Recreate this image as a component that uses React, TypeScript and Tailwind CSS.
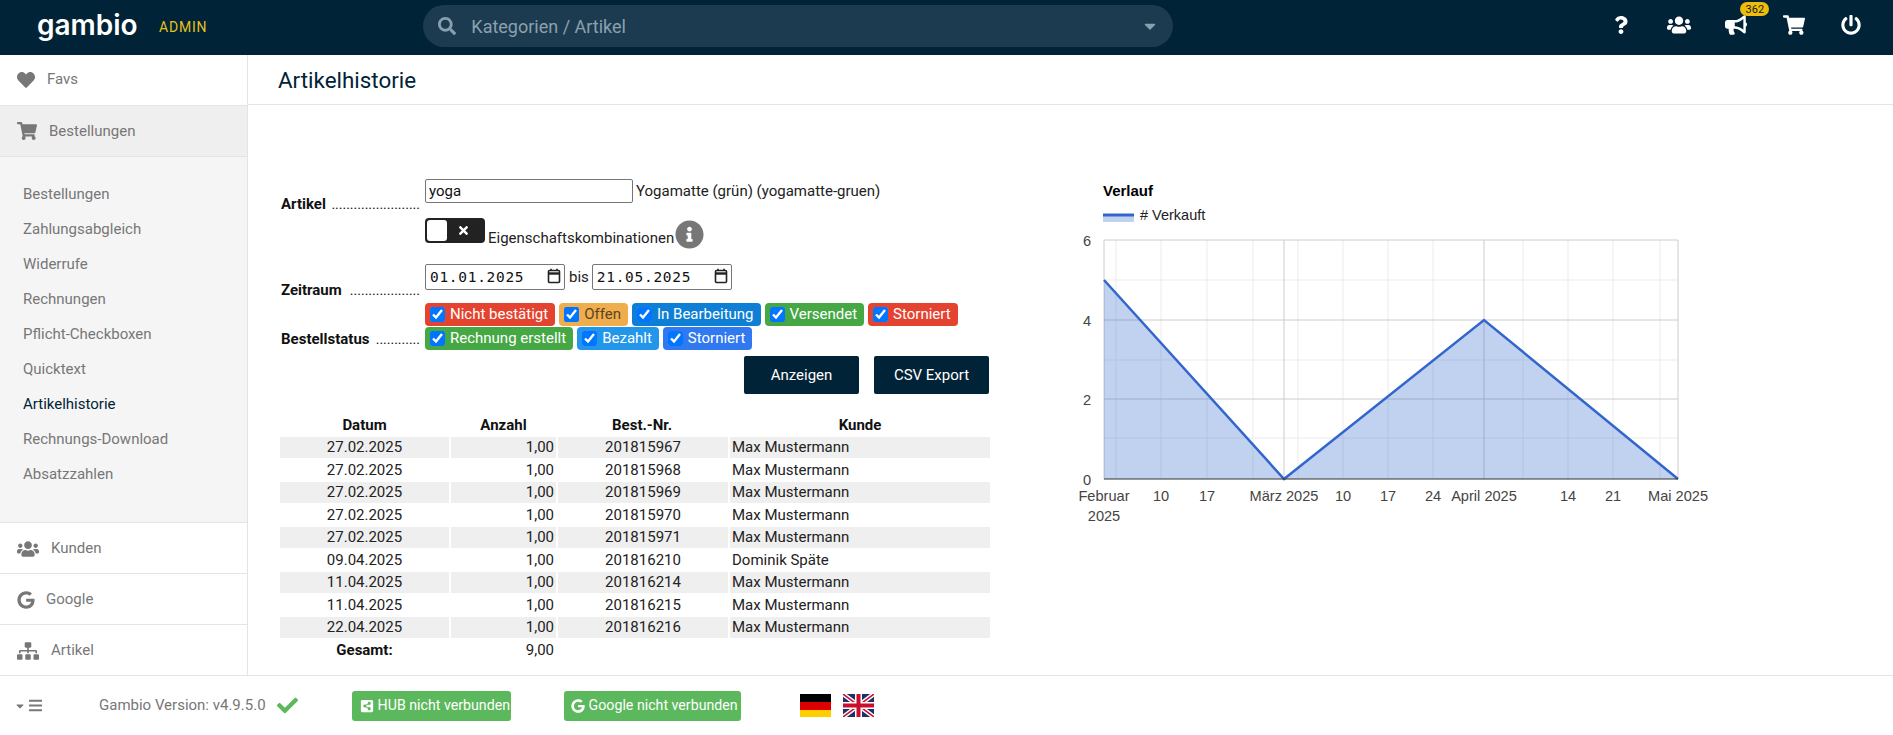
import { FaBars, FaBullhorn, FaCaretDown, FaCheck, FaGoogle, FaHeart, FaInfoCircle, FaPowerOff, FaQuestion, FaSearch, FaShareAltSquare, FaShoppingCart, FaSitemap, FaTimes, FaUsers } from 'react-icons/fa'

const subItems = ['Bestellungen', 'Zahlungsabgleich', 'Widerrufe', 'Rechnungen', 'Pflicht-Checkboxen', 'Quicktext', 'Artikelhistorie', 'Rechnungs-Download', 'Absatzzahlen']

const rows = [
  ['27.02.2025', '201815967', 'Max Mustermann'],
  ['27.02.2025', '201815968', 'Max Mustermann'],
  ['27.02.2025', '201815969', 'Max Mustermann'],
  ['27.02.2025', '201815970', 'Max Mustermann'],
  ['27.02.2025', '201815971', 'Max Mustermann'],
  ['09.04.2025', '201816210', 'Dominik Späte'],
  ['11.04.2025', '201816214', 'Max Mustermann'],
  ['11.04.2025', '201816215', 'Max Mustermann'],
  ['22.04.2025', '201816216', 'Max Mustermann'],
]

function Label({ text, dots, className }: { text: string; dots: number; className: string }) {
  return (
    <div className={`ml-px flex w-[139px] justify-between font-bold text-[15px] leading-5 text-[#111] ${className}`}>
      <span>{text}</span>
      <span className="font-normal text-[14px]">{'.'.repeat(dots)}</span>
    </div>
  )
}

function Status({ text, className }: { text: string; className: string }) {
  return (
    <label className={`flex h-[23px] items-center gap-[5px] rounded-[4px] pl-[5px] pr-[7px] text-[15px] ${className}`}>
      <input type="checkbox" defaultChecked className="h-[15px] w-[15px] m-0" />
      {text}
    </label>
  )
}

function DateBox({ value }: { value: string }) {
  return (
    <div className="flex h-[26px] w-[140px] items-center justify-between rounded-[2px] border border-[#767676] pl-[4px] pr-[3px]">
      <span className="pt-px font-['DejaVu_Sans_Mono'] text-[14.5px] tracking-[0.7px] text-[#111]">{value}</span>
      <svg width="14" height="16" viewBox="0 0 14 16" fill="none" stroke="#222" strokeWidth="1.6" className="mb-[2px]">
        <rect x="1.5" y="2.5" width="11" height="12" rx="1" />
        <path d="M1.5 5.5h11" strokeWidth="2.4" />
        <path d="M4 0.8v2M10 0.8v2" />
      </svg>
    </div>
  )
}

function SideRow({ icon, text, gap }: { icon: React.ReactNode; text: string; gap: string }) {
  return (
    <div className={`flex h-[51px] items-center border-t border-[#e4e4e4] pl-[17px] pt-px text-[#777] text-[15px] ${gap}`}>
      {icon}
      <span>{text}</span>
    </div>
  )
}

function Chart() {
  const minor = [1116, 1161, 1207, 1253, 1298, 1343, 1388, 1433, 1523, 1568, 1613, 1660]
  const axisLabels: [number, string][] = [[1161, '10'], [1207, '17'], [1284, 'März 2025'], [1343, '10'], [1388, '17'], [1433, '24'], [1484, 'April 2025'], [1568, '14'], [1613, '21'], [1678, 'Mai 2025']]
  return (
    <svg width="680" height="370" viewBox="1060 170 680 370" className="font-['Liberation_Sans']">
      <text x="1103" y="196" fontSize="15" fontWeight="700" fill="#000">Verlauf</text>
      <rect x="1103" y="215" width="31" height="7" fill="#3366cc" fillOpacity="0.3" />
      <path d="M1103 215h31" stroke="#3366cc" strokeWidth="3" />
      <text x="1140" y="220" fontSize="14.5" fill="#222"># Verkauft</text>
      {minor.map(x => <path key={x} d={`M${x} 240V479`} stroke="#ebebeb" />)}
      {[280, 360, 438].map(y => <path key={y} d={`M1104 ${y}H1678`} stroke="#ebebeb" />)}
      {[240, 320, 399].map(y => <path key={y} d={`M1104 ${y}H1678`} stroke="#cccccc" />)}
      {[1104, 1284, 1484, 1678].map(x => <path key={x} d={`M${x} 240V479`} stroke="#cccccc" />)}
      <path d="M1104 479V280L1284 479L1484 320L1678 479Z" fill="#3366cc" fillOpacity="0.3" />
      <path d="M1104 280L1284 479L1484 320L1678 479" fill="none" stroke="#3366cc" strokeWidth="2.5" />
      <path d="M1104 479H1678" stroke="#333" />
      {[[6, 246], [4, 326], [2, 405], [0, 485]].map(([t, y]) => (
        <text key={t} x="1091" y={y} fontSize="14.6" textAnchor="end" fill="#444">{t}</text>
      ))}
      <text x="1104" y="501" fontSize="14.6" textAnchor="middle" fill="#444">Februar</text>
      <text x="1104" y="521" fontSize="14.6" textAnchor="middle" fill="#444">2025</text>
      {axisLabels.map(([x, t]) => (
        <text key={x} x={x} y="501" fontSize="14.6" textAnchor="middle" fill="#444">{t}</text>
      ))}
    </svg>
  )
}

export default function App() {
  return (
    <div className="flex h-[735px] flex-col overflow-hidden bg-white font-['Roboto',sans-serif]">
      <header className="flex h-[55px] shrink-0 items-center bg-[#012337]">
        <span className="ml-[37px] mt-[-5px] w-[122px] font-['Inter'] text-[28px] font-semibold leading-none text-white">gambio</span>
        <span className="text-[14px] tracking-[0.8px] text-[#e3c21f]">ADMIN</span>
        <div className="ml-[216px] mt-[-3px] flex h-[42px] w-[750px] items-center rounded-full bg-[#1c3b50] pl-[15px] pr-[14px]">
          <FaSearch size={18} className="text-[#87a0ad]" />
          <span className="ml-[15px] flex-1 text-[18px] text-[#8ba1ae]">Kategorien / Artikel</span>
          <FaCaretDown size={18} className="text-[#87a0ad]" />
        </div>
        <div className="ml-[439px] mt-[-5px] flex items-center text-white">
          <FaQuestion size={18} />
          <FaUsers size={24} className="ml-[37px]" />
          <div className="relative ml-[34px]">
            <FaBullhorn size={22} />
            <span className="absolute left-[15px] top-[-12px] flex h-[14px] w-[29px] items-center justify-center rounded-full bg-[#eebd0c] text-[11px] leading-none text-[#1a1a1a]">362</span>
          </div>
          <FaShoppingCart size={22} className="ml-[36px]" />
          <FaPowerOff size={20} className="ml-[36px]" />
        </div>
      </header>

      <div className="flex min-h-0 flex-1">
        <aside className="flex w-[248px] shrink-0 flex-col border-r border-[#e4e4e4] text-[15px] text-[#777]">
          <div className="flex h-[50px] items-center gap-[12px] pl-[17px] pb-px">
            <FaHeart size={18} />
            <span>Favs</span>
          </div>
          <div className="flex h-[52px] items-center gap-[12px] border-y border-[#e4e4e4] bg-[#efefef] pl-[17px]">
            <FaShoppingCart size={20} />
            <span>Bestellungen</span>
          </div>
          <ul className="h-[365px] bg-[#f5f5f5] pt-[20px] pl-[23px]">
            {subItems.map(item => (
              <li key={item} className={`h-[35px] leading-[35px] ${item === 'Artikelhistorie' ? 'text-[#012337]' : ''}`}>{item}</li>
            ))}
          </ul>
          <SideRow icon={<FaUsers size={22} />} text="Kunden" gap="gap-[12px]" />
          <SideRow icon={<FaGoogle size={18} />} text="Google" gap="gap-[11px]" />
          <SideRow icon={<FaSitemap size={22} />} text="Artikel" gap="gap-[12px]" />
        </aside>

        <main className="flex min-w-0 flex-1 flex-col">
          <div className="flex h-[50px] shrink-0 items-center border-b border-[#e4e4e4] pl-[30px] pt-[2px] text-[22.4px] text-[#012337]">Artikelhistorie</div>
          <div className="flex pl-[32px]">
            <div className="w-[710px] pt-[74px] text-[15px] text-[#222]">
              <div className="flex">
                <Label text="Artikel" dots={24} className="mt-[15px]" />
                <div className="ml-[5px]">
                  <div className="flex items-start">
                    <div className="flex h-[24px] w-[208px] items-center rounded-[2px] border border-[#767676] pl-[3px] text-[#111]">yoga</div>
                    <span className="ml-[3px] leading-[24px]">Yogamatte (grün) (yogamatte-gruen)</span>
                  </div>
                  <div className="mt-[15px] flex h-[31px] items-start">
                    <div className="flex h-[25px] w-[60px] items-center rounded-[4px] bg-[#222] pl-[2px]">
                      <span className="h-[21px] w-[20px] rounded-[3px] bg-white" />
                      <FaTimes size={13} className="ml-[10px] mb-[1px] text-white" />
                    </div>
                    <span className="ml-[3px] mt-[10px] leading-5">Eigenschaftskombinationen</span>
                    <FaInfoCircle size={29} className="ml-[1px] mt-[2px] text-[#777]" />
                  </div>
                </div>
              </div>
              <div className="mt-[15px] flex h-[26px] items-start">
                <Label text="Zeitraum" dots={19} className="mt-[16px]" />
                <div className="ml-[5px] flex items-center">
                  <DateBox value="01.01.2025" />
                  <span className="ml-[4px] mr-[3px]">bis</span>
                  <DateBox value="21.05.2025" />
                </div>
              </div>
              <div className="mt-[13px] flex">
                <Label text="Bestellstatus" dots={12} className="mt-[26px]" />
                <div className="ml-[5px] flex flex-col gap-[1px]">
                  <div className="flex gap-[4px] text-white">
                    <Status text="Nicht bestätigt" className="bg-[#e4432f]" />
                    <Status text="Offen" className="bg-[#f0ad4e] text-[#5a4520]" />
                    <Status text="In Bearbeitung" className="bg-[#0f7fd6]" />
                    <Status text="Versendet" className="bg-[#45a845]" />
                    <Status text="Storniert" className="bg-[#e4432f]" />
                  </div>
                  <div className="flex gap-[4px] text-white">
                    <Status text="Rechnung erstellt" className="bg-[#45a845]" />
                    <Status text="Bezahlt" className="bg-[#2196ea]" />
                    <Status text="Storniert" className="bg-[#3079f0]" />
                  </div>
                </div>
              </div>
              <div className="mt-[6px] flex justify-end gap-[15px] pr-px">
                <button className="h-[38px] w-[115px] rounded-[2px] bg-[#012337] text-white">Anzeigen</button>
                <button className="h-[38px] w-[115px] rounded-[2px] bg-[#012337] text-white">CSV Export</button>
              </div>
              <table className="ml-[-2px] mt-[19px] w-[714px] table-fixed border-separate border-spacing-[2px] text-[15px] text-[#222]">
                <colgroup>
                  <col className="w-[169px]" />
                  <col className="w-[105px]" />
                  <col className="w-[170px]" />
                  <col />
                </colgroup>
                <thead>
                  <tr className="h-[20px] leading-[20px] font-bold text-[#111]">
                    <th className="p-0">Datum</th>
                    <th className="p-0">Anzahl</th>
                    <th className="p-0 pr-[2px]">Best.-Nr.</th>
                    <th className="p-0">Kunde</th>
                  </tr>
                </thead>
                <tbody>
                  {rows.map(([date, nr, name], i) => (
                    <tr key={nr} className={`h-[20.5px] leading-[20px] ${i % 2 === 0 ? 'bg-[#efefef]' : ''}`}>
                      <td className="p-0 text-center">{date}</td>
                      <td className="p-0 pr-[2px] text-right">1,00</td>
                      <td className="p-0 text-center">{nr}</td>
                      <td className="p-0 pl-[2px]">{name}</td>
                    </tr>
                  ))}
                  <tr className="h-[20.5px] leading-[20px]">
                    <td className="p-0 text-center font-bold text-[#111]">Gesamt:</td>
                    <td className="p-0 pr-[2px] text-right">9,00</td>
                    <td className="p-0" />
                    <td className="p-0" />
                  </tr>
                </tbody>
              </table>
            </div>
            <div className="ml-[70px] mt-[65px]">
              <Chart />
            </div>
          </div>
        </main>
      </div>

      <footer className="flex h-[60px] shrink-0 items-center whitespace-nowrap border-t border-[#e4e4e4] text-[14.2px]">
        <div className="ml-[14px] flex w-[85px] items-center gap-[2px] text-[#777]">
          <FaCaretDown size={12} />
          <FaBars size={15} />
        </div>
        <span className="text-[15px] text-[#777]">Gambio Version: v4.9.5.0</span>
        <FaCheck size={21} className="ml-[11px] text-[#5cb85c]" />
        <div className="ml-[54px] flex h-[30px] w-[159px] items-center gap-[4px] rounded-[3px] bg-[#5cb85c] pl-[8px] text-white">
          <FaShareAltSquare size={14} />
          <span>HUB nicht verbunden</span>
        </div>
        <div className="ml-[53px] flex h-[30px] w-[177px] items-center gap-[4px] rounded-[3px] bg-[#5cb85c] pl-[7px] text-white">
          <FaGoogle size={14} />
          <span>Google nicht verbunden</span>
        </div>
        <svg width="31" height="23" viewBox="0 0 31 23" className="ml-[59px]">
          <rect width="31" height="8" fill="#000" />
          <rect y="8" width="31" height="8" fill="#dd0000" />
          <rect y="16" width="31" height="7" fill="#ffce00" />
        </svg>
        <svg width="31" height="23" viewBox="0 0 31 23" className="ml-[12px]">
          <rect width="31" height="23" fill="#1f2f6e" />
          <path d="M0 0L31 23M31 0L0 23" stroke="#fff" strokeWidth="4.5" />
          <path d="M0 0L31 23M31 0L0 23" stroke="#c8102e" strokeWidth="1.5" />
          <path d="M15.5 0V23M0 11.5H31" stroke="#fff" strokeWidth="7" />
          <path d="M15.5 0V23M0 11.5H31" stroke="#c8102e" strokeWidth="4" />
        </svg>
      </footer>
    </div>
  )
}
